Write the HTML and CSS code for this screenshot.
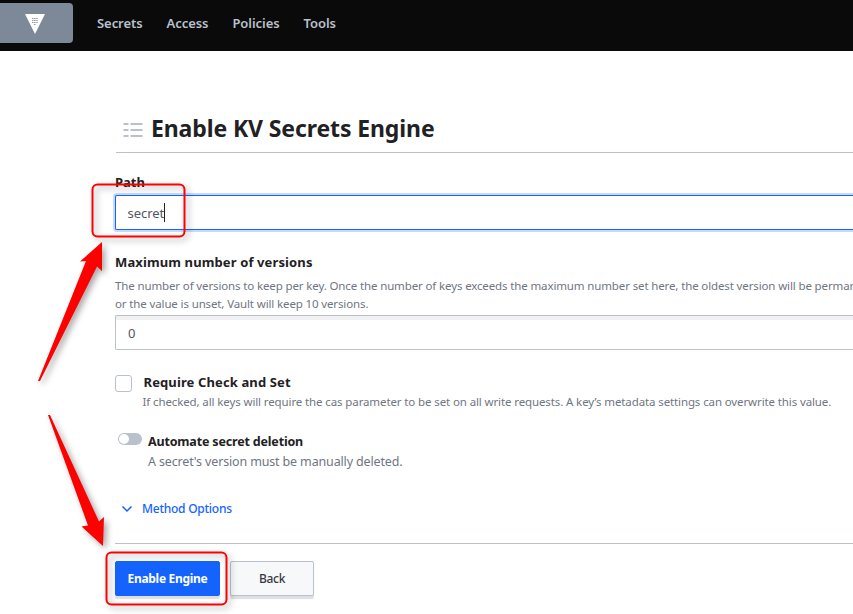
FILE: index.html
```html
<!DOCTYPE html>
<html lang="en">
<head>
<meta charset="utf-8">
<title>Vault</title>
<link rel="stylesheet" href="styles.css">
</head>
<body>
<header class="navbar">
  <a class="brand" aria-label="Vault">
    <svg width="20" height="20" viewBox="0 0 20 20"><path d="M0 0h20L10 20z" fill="#fff"/><path d="M7 4.500h6M7 6.500h6M7 8.500h6M9 10.500h2" stroke="#8d96a3" stroke-width="1" stroke-dasharray="1.500 .600"/></svg>
  </a>
  <nav class="menu">
    <a>Secrets</a><a>Access</a><a>Policies</a><a>Tools</a>
  </nav>
</header>
<main class="page">
  <div class="heading">
    <svg width="20" height="18" viewBox="0 0 20 18"><path d="M.5 5h5M7.500 5h12M.5 11h5M7.500 11h12M.5 17h5M7.500 17h12" stroke="#bac1cc" stroke-width="2"/></svg>
    <h1>Enable KV Secrets Engine</h1>
  </div>
  <section class="field path">
    <label class="label"><span>Path</span></label>
    <div class="input focused"><span class="t-secret">secret</span><i class="caret"></i></div>
  </section>
  <section class="field versions">
    <label class="label"><span class="t-max">Maximum number of versions</span></label>
    <p class="help"><span>The number of versions to keep per key. Once the number of keys exceeds the maximum number set here, the oldest version will be permanently</span><br><span>or the value is unset, Vault will keep 10 versions.</span></p>
    <div class="input inset">0</div>
  </section>
  <section class="check">
    <span class="box"></span>
    <div>
      <div class="label"><span class="t-max">Require Check and Set</span></div>
      <p class="help"><span>If checked, all keys will require the cas parameter to be set on all write requests. A key’s metadata settings can overwrite this value.</span></p>
    </div>
  </section>
  <section class="toggle">
    <span class="switch"></span>
    <div>
      <div class="label"><span class="t-auto">Automate secret deletion</span></div>
      <p class="help"><span>A secret's version must be manually deleted.</span></p>
    </div>
  </section>
  <a class="options">
    <svg width="12" height="8" viewBox="0 0 12 8"><path d="M1.500 1.500 6 6l4.500-4.500" fill="none" stroke="#1563ff" stroke-width="1.500"/></svg>
    <span>Method Options</span>
  </a>
  <footer class="actions">
    <button class="button primary">Enable Engine</button>
    <button class="button">Back</button>
  </footer>
</main>
<svg class="annotations" width="853" height="614" viewBox="0 0 853 614">
  <g fill="none" stroke="#fe0000" stroke-width="2">
    <rect x="92.500" y="184.500" width="92" height="52" rx="5"/>
    <rect x="106.500" y="552.500" width="120" height="52" rx="5"/>
  </g>
  <g fill="#fe0000">
    <path d="M102 242 80 261.500 86 261 38 381 40 381 97 266.500 102 271z"/>
    <path d="M48 415 50 415 99 521.500 104 517 103 546 81.500 526.500 88 525.500z"/>
  </g>
</svg>
</body>
</html>
```
FILE: styles.css
```css
* { box-sizing: border-box; }
html, body { margin: 0; height: 614px; overflow: hidden; }
body { background: #fff; color: #1f2124; font: 13px/18px "Noto Sans", "Open Sans", sans-serif; }
h1, p { margin: 0; }
span { white-space: nowrap; }
.navbar { display: flex; height: 51px; padding-top: 3px; background: #0a0a0a; }
.brand { display: flex; width: 73px; height: 40px; padding: 11px 0 0 25px; background: #7d8998; border-radius: 0 4px 4px 0; }
.menu { display: flex; gap: 24px; margin-left: 24px; padding-top: 11px; color: #bac1cc; font-weight: 600; letter-spacing: -.06px; white-space: nowrap; }
.page { height: 563px; margin-left: 113px; padding-left: 2px; overflow: hidden; }
.heading { display: flex; align-items: center; gap: 8px; height: 102px; margin-left: 1px; padding: 52px 0 0 7px; border-bottom: 1px solid #bac1cc; }
.heading svg { margin-top: 1px; }
h1 { font-size: 23px; line-height: 36px; font-weight: 700; letter-spacing: -.11px; white-space: nowrap; }
.label { display: block; height: 18px; font-size: 13px; font-weight: 700; white-space: nowrap; }
.path { padding-top: 20px; }
.input { display: flex; align-items: center; height: 35px; padding-left: 12px; border: 1px solid #bac1cc; border-right: 0; border-radius: 2px 0 0 2px; color: #525761; }
.focused { margin-top: 4px; padding-left: 11.5px; border-color: #1563ff; box-shadow: 0 0 0 2px #c8dafb; }
.t-secret { letter-spacing: -.05px; }
.caret { width: 1px; height: 19px; background: #222; }
.versions { padding-top: 23px; }
.help { color: #6f7682; font-size: 11.5px; line-height: 18px; letter-spacing: -.115px; }
.versions .help { padding-top: 6px; }
.versions .help { letter-spacing: -.13px; }
.t-max { letter-spacing: .12px; }
.inset { margin-top: 2px; box-shadow: inset 0 4px 0 #f1f1f3; }
.check { display: flex; gap: 11.5px; padding-top: 23px; }
.box { width: 17px; height: 17px; margin-top: 2px; border: 1px solid #bac1cc; border-radius: 3px; }
.check .help { padding-top: 2px; margin-left: -1px; }
.toggle { display: flex; gap: 6px; padding: 21px 0 0 3px; }
.switch { width: 24px; height: 12px; padding: 1px; border-radius: 6px; background: #bac1cc; margin-top: 1px; }
.switch::before { content: ""; display: block; width: 10px; height: 10px; border-radius: 50%; background: #fff; }
.t-auto { font-size: 12.5px; letter-spacing: -.17px; }
.toggle .help { padding-top: 3px; font-size: 12.5px; letter-spacing: -.15px; }
.options { display: flex; align-items: center; gap: 9px; height: 18px; margin: 29px 0 25px 6px; color: #1563ff; font-size: 12px; font-weight: 500; letter-spacing: -.25px; }
.actions { display: flex; gap: 10px; padding-top: 17px; border-top: 1px solid #bac1cc; }
.button { height: 35px; width: 84px; padding: 0; border: 1px solid #bac1cc; border-radius: 2px; background: #f7f8fa; color: #373a42; font: 500 12px/18px "Noto Sans", sans-serif; letter-spacing: -.3px; box-shadow: 0 3px 1px #dedfe2; }
.primary { width: 105px; background: #1563ff; border-color: #1563ff; color: #fff; font-weight: 700; }
.annotations { position: absolute; left: 0; top: 0; pointer-events: none; filter: drop-shadow(3px 3px 3px rgba(0,0,0,.35)); }
```
